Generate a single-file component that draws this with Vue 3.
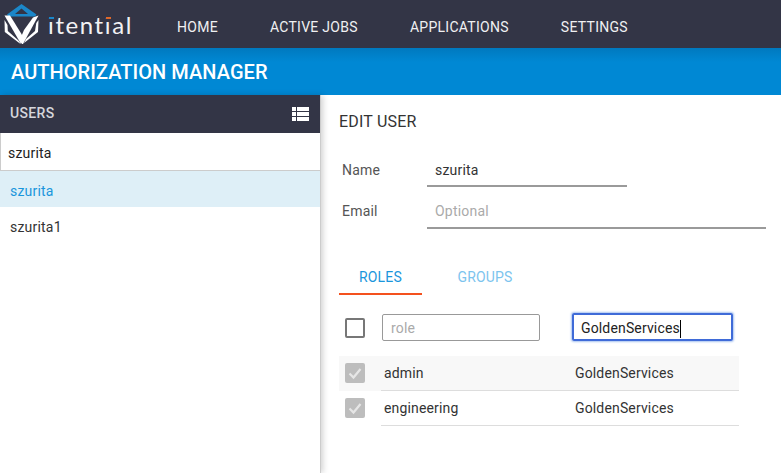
<script setup>
const nav = ['HOME', 'ACTIVE JOBS', 'APPLICATIONS', 'SETTINGS']
const users = [
  { name: 'szurita', active: true },
  { name: 'szurita1', active: false },
]
const roles = [
  { name: 'admin', group: 'GoldenServices', shaded: true },
  { name: 'engineering', group: 'GoldenServices', shaded: false },
]
</script>

<template>
  <div class="app">
    <header class="topbar">
      <div class="logo">
        <svg class="mark" width="44" height="48" viewBox="0 0 44 48">
          <path fill-rule="evenodd" d="M7 14.5 L21.5 4 L36.5 14.5 L35 16.5 L8.5 16.5 Z M15 14 L28 14 L21.5 8.5 Z" fill="#1b87c9" />
          <path d="M4.5 15.5 L10 15.5 L21.5 34 L24 40 L21 44 Z" fill="#fff" />
          <path d="M38.5 15.5 L33 17.5 L24 30 L21.5 36 L22 44 L23 44 Z" fill="#fff" />
          <path d="M4.5 20 L7.5 25 L7.8 31 L19 41 L20.5 44 L4.8 32 Z" fill="#fff" />
          <path d="M38.5 20 L36.3 23 L35 31 L26 39 L24 43 L38 32 Z" fill="#fff" />
        </svg>
        <span class="wordmark"><span class="i-blue">i</span>tent<span class="i-orange">i</span>al</span>
      </div>
      <nav class="nav">
        <a v-for="item in nav" :key="item" class="nav-item">{{ item }}</a>
      </nav>
    </header>
    <div class="titlebar">AUTHORIZATION MANAGER</div>
    <div class="body">
      <aside class="sidebar">
        <div class="side-head">
          <span>USERS</span>
          <svg width="17" height="14" viewBox="0 0 17 14" fill="#fff">
            <rect x="0" y="0" width="4" height="4" />
            <rect x="5" y="0" width="12" height="4" />
            <rect x="0" y="5" width="4" height="4" />
            <rect x="5" y="5" width="12" height="4" />
            <rect x="0" y="10" width="4" height="4" />
            <rect x="5" y="10" width="12" height="4" />
          </svg>
        </div>
        <div class="search">szurita</div>
        <div
          v-for="u in users"
          :key="u.name"
          class="user"
          :class="{ active: u.active }"
        >{{ u.name }}</div>
      </aside>
      <main class="main">
        <h2 class="edit-title">EDIT USER</h2>
        <div class="field name">
          <label>Name</label>
          <div class="value short">szurita</div>
        </div>
        <div class="field email">
          <label>Email</label>
          <div class="value long placeholder">Optional</div>
        </div>
        <div class="tabs">
          <div class="tab on">ROLES</div>
          <div class="tab off">GROUPS</div>
        </div>
        <div class="filters">
          <span class="box"></span>
          <div class="input role">role</div>
          <div class="input focus">GoldenServices<span class="caret"></span></div>
        </div>
        <div class="rows">
          <div v-for="r in roles" :key="r.name" class="row" :class="{ shaded: r.shaded }">
            <span class="check">
              <svg width="20" height="20" viewBox="0 0 20 20">
                <path d="M4.5 10.5 L8.5 14.5 L15.5 6" fill="none" stroke="#e6e6e6" stroke-width="2.2" />
              </svg>
            </span>
            <div class="cells">
              <span class="c1">{{ r.name }}</span>
              <span class="c2">{{ r.group }}</span>
            </div>
          </div>
        </div>
      </main>
    </div>
  </div>
</template>

<style scoped>
.app {
  width: 781px;
  height: 473px;
  overflow: hidden;
  font-family: Roboto, "Liberation Sans", sans-serif;
  letter-spacing: 0.2px;
  color: #333;
  background: #fff;
  display: flex;
  flex-direction: column;
}
.topbar {
  height: 48px;
  flex: none;
  background: #333546;
  display: flex;
}
.logo {
  width: 177px;
  display: flex;
  flex: none;
}
.mark {
  flex: none;
}
.wordmark {
  font-family: Lato, sans-serif;
  font-size: 24px;
  line-height: 50px;
  letter-spacing: 1.6px;
  color: #f2f2f4;
  margin-left: 4px;
}
.i-blue,
.i-orange {
  position: relative;
}
.i-blue::after,
.i-orange::after {
  content: "";
  position: absolute;
  left: 1px;
  top: 7px;
  width: 5px;
  height: 5px;
  background: #333546;
  border-top: 2px solid #1b87c9;
  box-sizing: border-box;
}
.i-orange::after {
  border-top-color: #e0692a;
}
.nav {
  display: flex;
  gap: 52px;
  padding-top: 19px;
}
.nav-item {
  font-size: 14px;
  line-height: 17px;
  letter-spacing: 0.28px;
  color: #f0f0f2;
}
.titlebar {
  height: 47px;
  flex: none;
  background: linear-gradient(#0079bf, #0088d4 14px);
  color: #fff;
  font-size: 20px;
  font-weight: 500;
  letter-spacing: 0.05px;
  line-height: 48px;
  padding-left: 11px;
}
.body {
  flex: 1;
  display: flex;
  min-height: 0;
}
.sidebar {
  width: 321px;
  flex: none;
  background: #fff;
  border-right: 1px solid #ccc;
  box-sizing: border-box;
  box-shadow: 2px 0 6px rgba(0, 0, 0, 0.18);
}
.side-head {
  height: 38px;
  background: #333546;
  color: #d6d6dc;
  font-size: 14px;
  font-weight: 500;
  letter-spacing: 0.35px;
  display: flex;
  align-items: center;
  justify-content: space-between;
  padding: 0 11px 0 10px;
}
.side-head span {
  margin-top: -2px;
}
.search {
  height: 38px;
  box-sizing: border-box;
  border-left: 1px solid #ccc;
  border-bottom: 1px solid #ccc;
  font-size: 14px;
  line-height: 40px;
  padding-left: 7px;
  color: #222;
}
.user {
  height: 36px;
  line-height: 40px;
  font-size: 14px;
  padding-left: 10px;
  color: #333;
}
.user.active {
  background: #deeff7;
  color: #1a96dc;
}
.main {
  flex: 1;
  min-width: 0;
  padding-left: 18px;
}
.edit-title {
  margin: 0;
  font-size: 16px;
  font-weight: 400;
  color: #333;
  line-height: 20px;
  padding-top: 17px;
}
.field {
  display: flex;
}
.field label {
  width: 88px;
  padding-left: 3px;
  box-sizing: border-box;
  font-size: 14px;
  color: #555;
  line-height: 20px;
}
.field.name {
  margin-top: 21px;
}
.field.name label {
  padding-top: 7px;
}
.field.email {
  margin-top: 5px;
}
.field.email label {
  padding-top: 9px;
}
.value {
  height: 34px;
  box-sizing: border-box;
  font-size: 14px;
  line-height: 34px;
  padding-left: 8px;
  color: #333;
}
.short {
  width: 200px;
  border-bottom: 2px solid #9a9a9a;
}
.long {
  width: 339px;
  height: 37px;
  line-height: 38px;
  border-bottom: 2px solid #9a9a9a;
}
.placeholder {
  color: #aaa;
}
.tabs {
  display: flex;
  margin-top: 28px;
}
.tab {
  font-size: 14px;
  line-height: 20px;
  text-align: center;
  padding: 10px 0 6px;
}
.tab.on {
  width: 83px;
  color: #1a96dc;
  border-bottom: 2px solid #f4511e;
}
.tab.off {
  width: 126px;
  color: #7cc4ee;
}
.filters {
  display: flex;
  align-items: flex-start;
  margin-top: 19px;
  height: 28px;
}
.box {
  width: 20px;
  height: 20px;
  box-sizing: border-box;
  border: 2px solid #777;
  border-radius: 2px;
  margin: 4px 0 0 6px;
  flex: none;
}
.input {
  height: 27px;
  box-sizing: border-box;
  font-size: 14px;
  line-height: 27px;
  padding-left: 8px;
  flex: none;
}
.role {
  width: 158px;
  margin-left: 17px;
  border: 1px solid #999;
  border-radius: 2px;
  color: #aaa;
}
.focus {
  width: 161px;
  height: 28px;
  margin: -1px 0 0 32px;
  border: 2px solid #3f6bd8;
  border-radius: 2px;
  box-shadow: 0 0 2px 1px #a9c4f0;
  color: #222;
  padding-left: 7px;
  line-height: 27px;
  letter-spacing: 0.15px;
}
.caret {
  display: inline-block;
  width: 1px;
  height: 18px;
  background: #000;
  vertical-align: middle;
}
.rows {
  margin-top: 14px;
  width: 400px;
}
.row {
  height: 35px;
  display: flex;
}
.row.shaded {
  background: #f8f8f8;
}
.check {
  width: 20px;
  height: 20px;
  margin: 7px 0 0 6px;
  background: #bdbdbd;
  border-radius: 2px;
  flex: none;
}
.check svg {
  display: block;
}
.cells {
  margin-left: 16px;
  flex: 1;
  display: flex;
  border-bottom: 1px solid #ddd;
  font-size: 14px;
  line-height: 34px;
  letter-spacing: 0.15px;
  color: #333;
}
.c1 {
  width: 194px;
  padding-left: 3px;
  box-sizing: border-box;
}
</style>
